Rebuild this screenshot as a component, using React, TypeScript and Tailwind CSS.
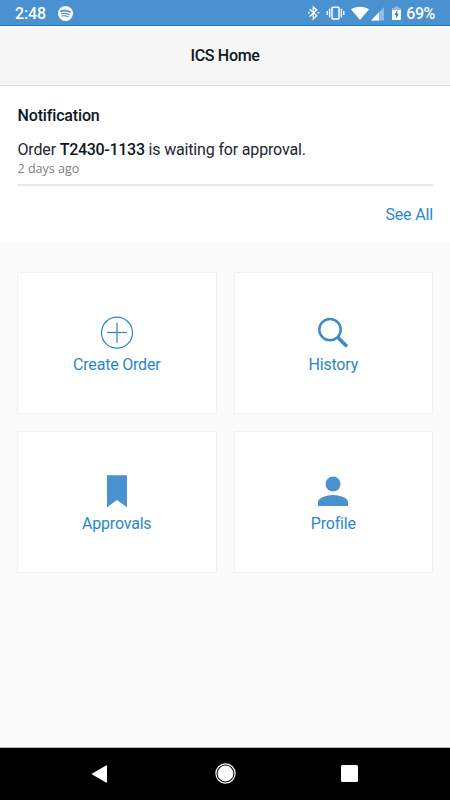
import type { ReactNode } from 'react'

interface TileProps {
  label: string
  icon: ReactNode
}

const StatusBar = () => (
  <div className="flex h-[26px] shrink-0 items-center border-b border-[#1c80c6] bg-[#4a91cf] pr-[15px] pl-[15px] text-white">
    <span className="w-[43px] pt-[3px] text-base leading-none font-medium tracking-[-0.15px]">2:48</span>
    {/* Spotify */}
    <svg className="mt-px h-[15px] w-[15px]" viewBox="0 0 15 15" fill="none">
      <circle cx="7.5" cy="7.5" r="7.5" fill="#fff" />
      <g stroke="#4a91cf" strokeLinecap="round">
        <path d="M3 5.1c3-.8 6.400-.5 9 .9" strokeWidth="1.700" />
        <path d="M3.500 7.700c2.600-.6 5.300-.4 7.600.9" strokeWidth="1.300" />
        <path d="M4 10c2.200-.5 4.200-.3 6.200.8" strokeWidth="1.100" />
      </g>
    </svg>

    <div className="ml-auto flex items-center">
      <svg className="h-[16px] w-[13px]" viewBox="0 0 13 16" fill="none" stroke="#fff">
        <path d="M2.700 4.300l7 6.400-3.400 3.200V2l3.400 3.100-7 6.400" strokeWidth="1.400" />
        <path d="M1 7.100h1.600v1.500H1zM10.700 7.100h1.600v1.500h-1.600z" fill="#fff" stroke="none" />
      </svg>
      <svg className="ml-[6px] h-[16px] w-[19px]" viewBox="0 0 19 16" fill="none" stroke="#fff">
        <rect x="6" y="2.200" width="7" height="11.800" rx=".8" strokeWidth="1.500" />
        <path d="M3.600 3.800v8.400M15.400 3.800v8.400" strokeWidth="1.400" />
        <path d="M1.200 6v4M17.800 6v4" strokeWidth="1.300" />
      </svg>
      <svg className="ml-[6px] h-[16px] w-[18px]" viewBox="0 0 18 16" fill="#fff">
        <path d="M0 4.300C5 .9 13 .9 18 4.300L9 15z" />
      </svg>
      <svg className="ml-[2px] h-[16px] w-[13px]" viewBox="0 0 13 16">
        <path d="M0 15.500L13 2v13.500z" fill="#8fbce2" />
        <path d="M0 15.500L8 7.200v8.300z" fill="#fff" />
      </svg>
      <svg className="ml-[8px] h-[16px] w-[9px]" viewBox="0 0 9 16">
        <path d="M2.500 1.500h4V3H9v3H0V3h2.500z" fill="#8fbce2" />
        <path d="M0 5h9v9.200a.8.800 0 0 1-.8.800H.8a.8.800 0 0 1-.8-.8z" fill="#fff" />
        <path d="M5.300 5L2.400 10H4v3.500L6.900 8.700H5.300z" fill="#3a83c4" />
      </svg>
      <span className="ml-[5px] pt-[3px] text-base leading-none font-medium tracking-[-0.4px]">69%</span>
    </div>
  </div>
)

const Tile = ({ label, icon }: TileProps) => (
  <button className="flex h-[142px] flex-col items-center border border-[#f1f1f1] bg-white pt-[43px] text-[#2a87cc]">
    {icon}
    <span className="mt-[5px] text-base leading-5 tracking-[-0.2px]">{label}</span>
  </button>
)

const PlusIcon = () => (
  <svg className="h-[34px] w-[34px]" viewBox="0 0 34 34" fill="none" stroke="#2a86c9">
    <circle cx="17" cy="16.700" r="15.500" strokeWidth="1.200" />
    <path d="M7 16.500h20" strokeWidth="1.200" />
    <path d="M17 6.700v20" strokeWidth="1.200" />
  </svg>
)

const SearchIcon = () => (
  <svg className="h-[34px] w-[34px]" viewBox="0 0 34 34" fill="none" stroke="#3d8bcc">
    <circle cx="14" cy="13.600" r="10.700" strokeWidth="2.500" />
    <path d="M21.200 20.800l9.800 9.700" strokeWidth="3.600" />
  </svg>
)

const BookmarkIcon = () => (
  <svg className="h-[34px] w-[34px]" viewBox="0 0 34 34" fill="#4a91cf">
    <path d="M7 .3h20v32L17 25 7 32.300z" />
  </svg>
)

const PersonIcon = () => (
  <svg className="h-[34px] w-[34px]" viewBox="0 0 34 34" fill="#4a91cf">
    <circle cx="17" cy="9" r="7.500" />
    <path d="M2 31v-4c0-4 8-7 15-7s15 3 15 7v4z" />
  </svg>
)

const tiles: TileProps[] = [
  { label: 'Create Order', icon: <PlusIcon /> },
  { label: 'History', icon: <SearchIcon /> },
  { label: 'Approvals', icon: <BookmarkIcon /> },
  { label: 'Profile', icon: <PersonIcon /> },
]

const NavBar = () => (
  <nav className="mt-auto flex h-[53px] shrink-0 items-center justify-between border-t border-[#b4b4b4] bg-black pr-[92px] pb-px pl-[91px]">
    <svg className="h-[18px] w-4" viewBox="0 0 16 18" fill="#fff">
      <path d="M.4 9L15 .4q1-.4 1 .6v16q0 1-1 .6z" />
    </svg>
    <svg className="ml-[2px] h-[21px] w-[21px]" viewBox="0 0 21 21">
      <circle cx="10.500" cy="10.500" r="9.600" fill="none" stroke="#fff" strokeWidth="1.200" />
      <circle cx="10.500" cy="10.500" r="7.900" fill="#fff" />
    </svg>
    <div className="h-[17px] w-[17px] rounded-[1.500px] bg-white" />
  </nav>
)

export default function App() {
  return (
    <div className="flex h-screen w-full flex-col overflow-hidden bg-[#fbfbfb] font-['Roboto',sans-serif] text-[#0b1723]">
      <StatusBar />

      <header className="flex h-[60px] shrink-0 items-center justify-center border-b border-[#dedede] bg-[#f6f6f6] pt-px">
        <h1 className="text-base leading-5 font-medium tracking-[-0.3px]">ICS Home</h1>
      </header>

      <section className="h-[156px] shrink-0 bg-white px-[17px] pt-[20px]">
        <h2 className="pl-[0.5px] text-base leading-5 font-medium tracking-[-0.15px]">Notification</h2>
        <div className="mt-[14px] border-b-2 border-[#e9e9e9] pb-[7px]">
          <p className="pl-[0.5px] text-base leading-5 tracking-[-0.16px] text-[#1b2632]">
            Order <span className="font-medium tracking-[-0.3px] text-[#0b1723]">T2430-1133</span> is waiting for approval.
          </p>
          <p className="pl-[0.5px] font-['Open_Sans',sans-serif] text-[12.500px] leading-[17px] text-[#808080]">2 days ago</p>
        </div>
        <div className="mt-[19px] text-right text-base leading-5 tracking-[-0.15px] text-[#2a87cc]">See All</div>
      </section>

      <main className="grid grid-cols-2 gap-x-[17px] gap-y-[17px] px-[17px] pt-[30px]">
        {tiles.map((tile) => (
          <Tile key={tile.label} label={tile.label} icon={tile.icon} />
        ))}
      </main>

      <NavBar />
    </div>
  )
}
